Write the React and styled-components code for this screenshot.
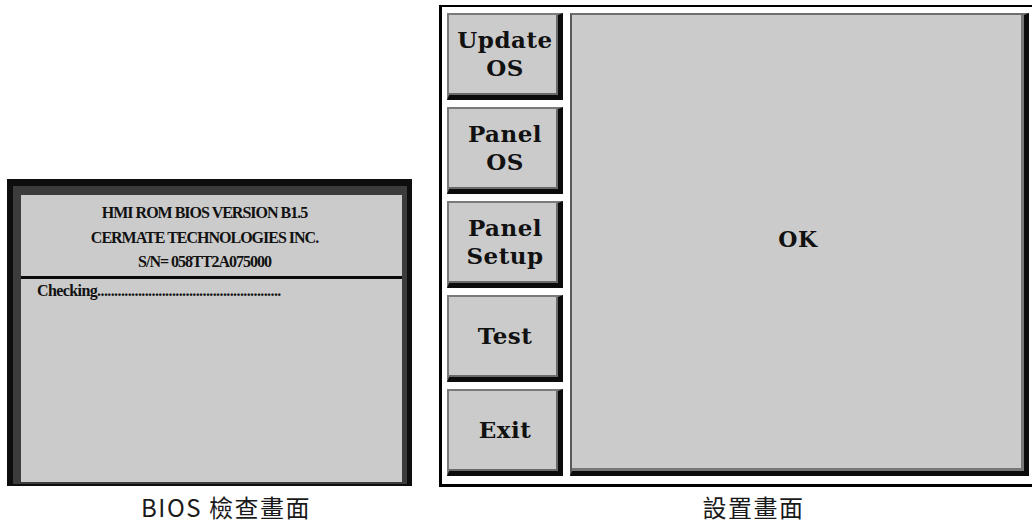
import React from 'react';
import styled, { createGlobalStyle } from 'styled-components';

const GlobalStyle = createGlobalStyle`
    html, body {
        margin: 0;
        padding: 0;
        background: #fff;
        overflow: hidden;
    }
`;

const Page = styled.div`
    display: grid;
    grid-template-columns: 438px 594px;
    grid-template-rows: 487px auto;
    width: 1032px;
    height: 526px;
`;

const LeftCell = styled.div`
    display: flex;
    align-items: flex-end;
    padding-left: 7px;
`;

const RightCell = styled.div`
    display: flex;
    align-items: flex-end;
`;

/* BIOS screen */
const BiosCase = styled.div`
    box-sizing: border-box;
    width: 405px;
    height: 307px;
    margin-bottom: 1px;
    background: #0e0e0e;
    padding: 7px 5px 2px 6px;
    display: flex;
`;

const BiosBezel = styled.div`
    flex: 1;
    display: flex;
    background: #3c3c3c;
    padding: 9px 5px 2px 8px;
`;

const BiosScreen = styled.div`
    flex: 1;
    background: #cbcbcb;
    font-family: 'Liberation Serif', 'Times New Roman', serif;
    font-weight: bold;
    font-size: 16px;
    letter-spacing: -1px;
    color: #111;
    display: flex;
    flex-direction: column;
`;

const BiosHeader = styled.div`
    padding: 6px 14px 0 0;
    height: 75px;
    text-align: center;
    line-height: 24.5px;
`;

const BiosRule = styled.div`
    height: 3px;
    background: #0a0a0a;
`;

const BiosLog = styled.div`
    padding: 2px 0 0 16px;
    line-height: 20px;
    letter-spacing: -0.6px;
`;

/* Setup screen */
const SetupFrame = styled.div`
    box-sizing: border-box;
    width: 594px;
    height: 482px;
    margin-left: 1px;
    border: 3px solid #000;
    border-top-width: 2px;
    border-right: none;
    padding: 6px 3px 8px 5px;
    display: grid;
    grid-template-columns: 116px 1fr;
    gap: 7px;
`;

const ButtonColumn = styled.div`
    display: flex;
    flex-direction: column;
    gap: 7px;
`;

const MenuButton = styled.div`
    flex: 1;
    box-sizing: border-box;
    background: #cbcbcb;
    border-top: 2px solid #7a7a7a;
    border-left: 2px solid #7a7a7a;
    border-right: 5px solid #0c0c0c;
    border-bottom: 5px solid #0c0c0c;
    box-shadow: inset -2px -2px 0 #6a6a6a;
    display: flex;
    align-items: center;
    justify-content: center;
    text-align: center;
    font-family: 'DejaVu Serif', 'Liberation Serif', serif;
    font-weight: bold;
    font-size: 23px;
    letter-spacing: 0.5px;
    line-height: 28px;
    color: #111;
    padding: 0 0 2px 3px;
`;

const StatusPanel = styled.div`
    box-sizing: border-box;
    background: #cbcbcb;
    border-top: 2px solid #6e6e6e;
    border-left: 2px solid #5a5a5a;
    border-right: 5px solid #0c0c0c;
    border-bottom: 5px solid #0c0c0c;
    box-shadow: inset -3px -3px 0 #777;
    display: flex;
    align-items: center;
    justify-content: center;
    font-family: 'DejaVu Serif', 'Liberation Serif', serif;
    font-weight: bold;
    font-size: 22px;
    letter-spacing: 0.5px;
    color: #111;
    padding-bottom: 8px;
`;

const Caption = styled.div`
    padding-top: 5px;
    padding-left: ${(p) => p.$offset}px;
    text-align: center;
    font-family: 'Noto Sans CJK TC', 'Noto Sans', sans-serif;
    font-size: 24px;
    letter-spacing: 1.5px;
    line-height: 30px;
    color: #1a1a1a;
`;

const buttons = [
    ['Update', 'OS'],
    ['Panel', 'OS'],
    ['Panel', 'Setup'],
    ['Test'],
    ['Exit']
];

export default function App() {
    return (
        <>
            <GlobalStyle />
            <Page>
                <LeftCell>
                    <BiosCase>
                        <BiosBezel>
                            <BiosScreen>
                                <BiosHeader>
                                    HMI ROM BIOS VERSION B1.5
                                    <br />
                                    CERMATE TECHNOLOGIES INC.
                                    <br />
                                    S/N= 058TT2A075000
                                </BiosHeader>
                                <BiosRule />
                                <BiosLog>Checking{'.'.repeat(54)}</BiosLog>
                            </BiosScreen>
                        </BiosBezel>
                    </BiosCase>
                </LeftCell>
                <RightCell>
                    <SetupFrame>
                        <ButtonColumn>
                            {buttons.map((lines) => (
                                <MenuButton key={lines.join('-')}>
                                    <div>
                                        {lines.map((l, i) => (
                                            <div key={i}>{l}</div>
                                        ))}
                                    </div>
                                </MenuButton>
                            ))}
                        </ButtonColumn>
                        <StatusPanel>OK</StatusPanel>
                    </SetupFrame>
                </RightCell>
                <Caption $offset={14}>BIOS 檢查畫面</Caption>
                <Caption $offset={37}>設置畫面</Caption>
            </Page>
        </>
    );
}
